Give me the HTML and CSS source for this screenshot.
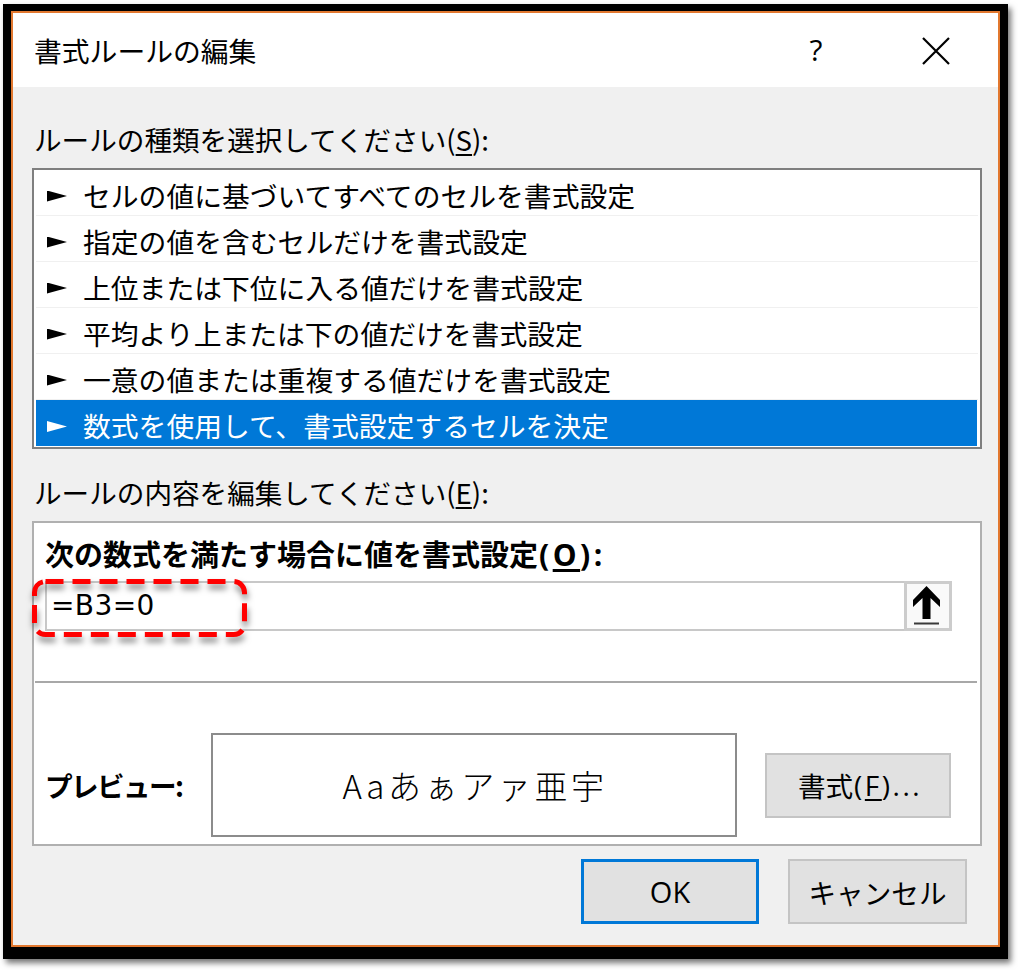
FILE: index.html
```html
<!DOCTYPE html>
<html lang="ja">
<head>
<meta charset="utf-8">
<title>書式ルールの編集</title>
<link rel="stylesheet" href="styles.css">
</head>
<body>
<div class="frame">
  <div class="dialog">
    <div class="titlebar">
      <span class="title">書式ルールの編集</span>
      <span class="help">?</span>
      <svg class="close" width="28" height="28" viewBox="0 0 28 28"><path d="M1 1 L27 27 M27 1 L1 27" stroke="#000" stroke-width="2.2" fill="none"/></svg>
    </div>
    <div class="content">
      <div class="label first">ルールの種類を選択してください(<u>S</u>):</div>
      <div class="listbox">
        <div class="row"><span class="tri"></span><span class="rtext">セルの値に基づいてすべてのセルを書式設定</span></div>
        <div class="row"><span class="tri"></span><span class="rtext">指定の値を含むセルだけを書式設定</span></div>
        <div class="row"><span class="tri"></span><span class="rtext">上位または下位に入る値だけを書式設定</span></div>
        <div class="row"><span class="tri"></span><span class="rtext">平均より上または下の値だけを書式設定</span></div>
        <div class="row"><span class="tri"></span><span class="rtext">一意の値または重複する値だけを書式設定</span></div>
        <div class="row sel"><span class="tri"></span><span class="rtext">数式を使用して、書式設定するセルを決定</span></div>
      </div>
      <div class="label second">ルールの内容を編集してください(<u>E</u>):</div>
      <div class="group">
        <div class="glabel">次の数式を満たす場合に値を書式設定<span class="lat">(<u>O</u>):</span></div>
        <div class="formula">
          <div class="input">
            <span class="ftext">=B3=0</span>
            <div class="refbtn">
              <svg width="42" height="44" viewBox="0 0 42 44">
                <polygon points="19.5,2 33,16 33,23 23.5,14 23.5,35 15.5,35 15.5,14 6,23 6,16" fill="#000"/>
                <rect x="7" y="38.5" width="25" height="2" fill="#3a3a3a"/>
              </svg>
            </div>
          </div>
          <svg class="highlight" width="224" height="70" viewBox="0 0 224 70">
            <rect x="3.5" y="3.5" width="210" height="53" rx="11" ry="11" fill="none" stroke="#ff0000" stroke-width="5" stroke-dasharray="18 9"/>
          </svg>
        </div>
        <div class="divider"></div>
        <div class="preview">
          <span class="plabel">プレビュー:</span>
          <div class="pbox">Aaあぁアァ亜宇</div>
          <div class="btn fmt">書式<span class="lat">(<u>F</u>)...</span></div>
        </div>
      </div>
      <div class="buttons">
        <div class="btn ok">OK</div>
        <div class="btn cancel">キャンセル</div>
      </div>
    </div>
  </div>
</div>
</body>
</html>
```
FILE: styles.css
```css
* { box-sizing: border-box; }
html, body {
  margin: 0;
  padding: 0;
  background: #ffffff;
}
body {
  font-family: "Noto Sans CJK JP", "Noto Sans", sans-serif;
  color: #000;
  width: 1018px;
  height: 970px;
  overflow: hidden;
}
.frame {
  margin: 4px 0 0 3px;
  width: 1005px;
  height: 955px;
  border: 8px solid #000;
  border-top-width: 7px;
  border-bottom-width: 12px;
  box-shadow: 3px 4px 6px rgba(0,0,0,0.55);
}
.dialog {
  width: 100%;
  height: 100%;
  border: 2px solid #e2782f;
  background: #f0f0f0;
  display: flex;
  flex-direction: column;
}
.titlebar {
  height: 74px;
  flex: none;
  background: #fff;
  display: flex;
  align-items: center;
  padding-left: 21px;
}
.title {
  flex: 1;
  font-size: 27.8px;
  line-height: 36px;
}
.help {
  width: 40px;
  text-align: center;
  font-family: "Open Sans", sans-serif;
  font-size: 30px;
  line-height: 36px;
}
.close {
  margin-left: 86px;
  margin-right: 48px;
  margin-top: 1px;
}
.content {
  flex: 1;
  padding-top: 34px;
}
.label {
  font-size: 27.6px;
  line-height: 36px;
  height: 36px;
  margin-left: 21px;
  white-space: nowrap;
}
.label u, .glabel u, .btn u { text-underline-offset: 3px; }
.label.second { margin-top: 25px; }
.listbox {
  margin: 11px 0 0 19px;
  width: 950px;
  height: 281px;
  background: #fff;
  border: 2px solid #7f7f7f;
  padding: 0 2px 1px 2px;
}
.row {
  height: 46px;
  display: flex;
  align-items: center;
  border-bottom: 1px solid #f0f0f0;
  font-size: 27.8px;
  line-height: 36px;
  white-space: nowrap;
}
.row .tri {
  width: 20px;
  height: 11px;
  margin-left: 11px;
  margin-right: 16px;
  margin-top: 7px;
  background: #000;
  clip-path: polygon(0 0, 100% 50%, 0 100%);
}
.row .rtext { padding-top: 4px; }
.row.sel {
  background: #0078d7;
  color: #fff;
  border-bottom: none;
  margin-right: 1px;
}
.row.sel .tri { background: #fff; }
.group {
  margin: 11px 0 0 19px;
  width: 950px;
  height: 325px;
  background: #fff;
  border: 2px solid #b0b0b0;
  padding: 12px 0 0 0;
}
.glabel {
  font-size: 29px;
  font-weight: 700;
  line-height: 36px;
  height: 36px;
  margin-left: 11px;
  white-space: nowrap;
}
.glabel .lat {
  font-family: "Open Sans", sans-serif;
  font-size: 30px;
  letter-spacing: 3.5px;
  margin-left: 1px;
}
.formula {
  position: relative;
  margin: 10px 0 0 11px;
  width: 907px;
  height: 50px;
}
.input {
  width: 100%;
  height: 100%;
  border: 2px solid #c8c8c8;
  border-right: none;
  display: flex;
  align-items: center;
  background: #fff;
}
.ftext {
  flex: 1;
  font-family: "DejaVu Sans", sans-serif;
  font-size: 28px;
  letter-spacing: 0.4px;
  padding-left: 4px;
  line-height: 40px;
}
.refbtn {
  width: 48px;
  height: 50px;
  margin: -2px 0;
  border: 3px solid #cccccc;
  background: #f9f9f9;
  display: flex;
  align-items: center;
  justify-content: center;
}
.highlight {
  position: absolute;
  left: -14px;
  top: -3px;
  filter: drop-shadow(1px 5px 3px rgba(0,0,0,0.5));
}
.divider {
  margin: 50px 3px 0 1px;
  height: 2px;
  background: #a8a8a8;
}
.preview {
  margin-top: 50px;
  height: 104px;
  display: flex;
  align-items: center;
}
.plabel {
  width: 177px;
  padding-left: 11px;
  font-size: 27.6px;
  font-weight: 700;
  letter-spacing: -1.6px;
  line-height: 36px;
  white-space: nowrap;
}
.pbox {
  width: 526px;
  height: 104px;
  border: 2px solid #8c8c8c;
  display: flex;
  align-items: center;
  justify-content: center;
  font-size: 33px;
  font-weight: 300;
  letter-spacing: 3.6px;
  padding-left: 2px;
}
.btn {
  background: #e1e1e1;
  border: 2px solid #c4c4c4;
  display: flex;
  align-items: center;
  justify-content: center;
  font-size: 27.6px;
  line-height: 36px;
  white-space: nowrap;
}
.btn.fmt {
  margin-left: 28px;
  width: 186px;
  height: 65px;
  padding-left: 2px;
}
.btn.fmt .lat {
  font-family: "Open Sans", sans-serif;
  font-size: 28px;
  letter-spacing: 2.5px;
  margin-left: 1px;
  margin-right: -2px;
}
.buttons {
  margin-top: 13px;
  display: flex;
  justify-content: flex-end;
  gap: 29px;
  padding-right: 31px;
}
.btn.ok {
  width: 178px;
  height: 65px;
  border: 3px solid #0078d7;
  font-family: "Open Sans", sans-serif;
  font-size: 29px;
}
.btn.cancel {
  width: 179px;
  height: 65px;
}
```
